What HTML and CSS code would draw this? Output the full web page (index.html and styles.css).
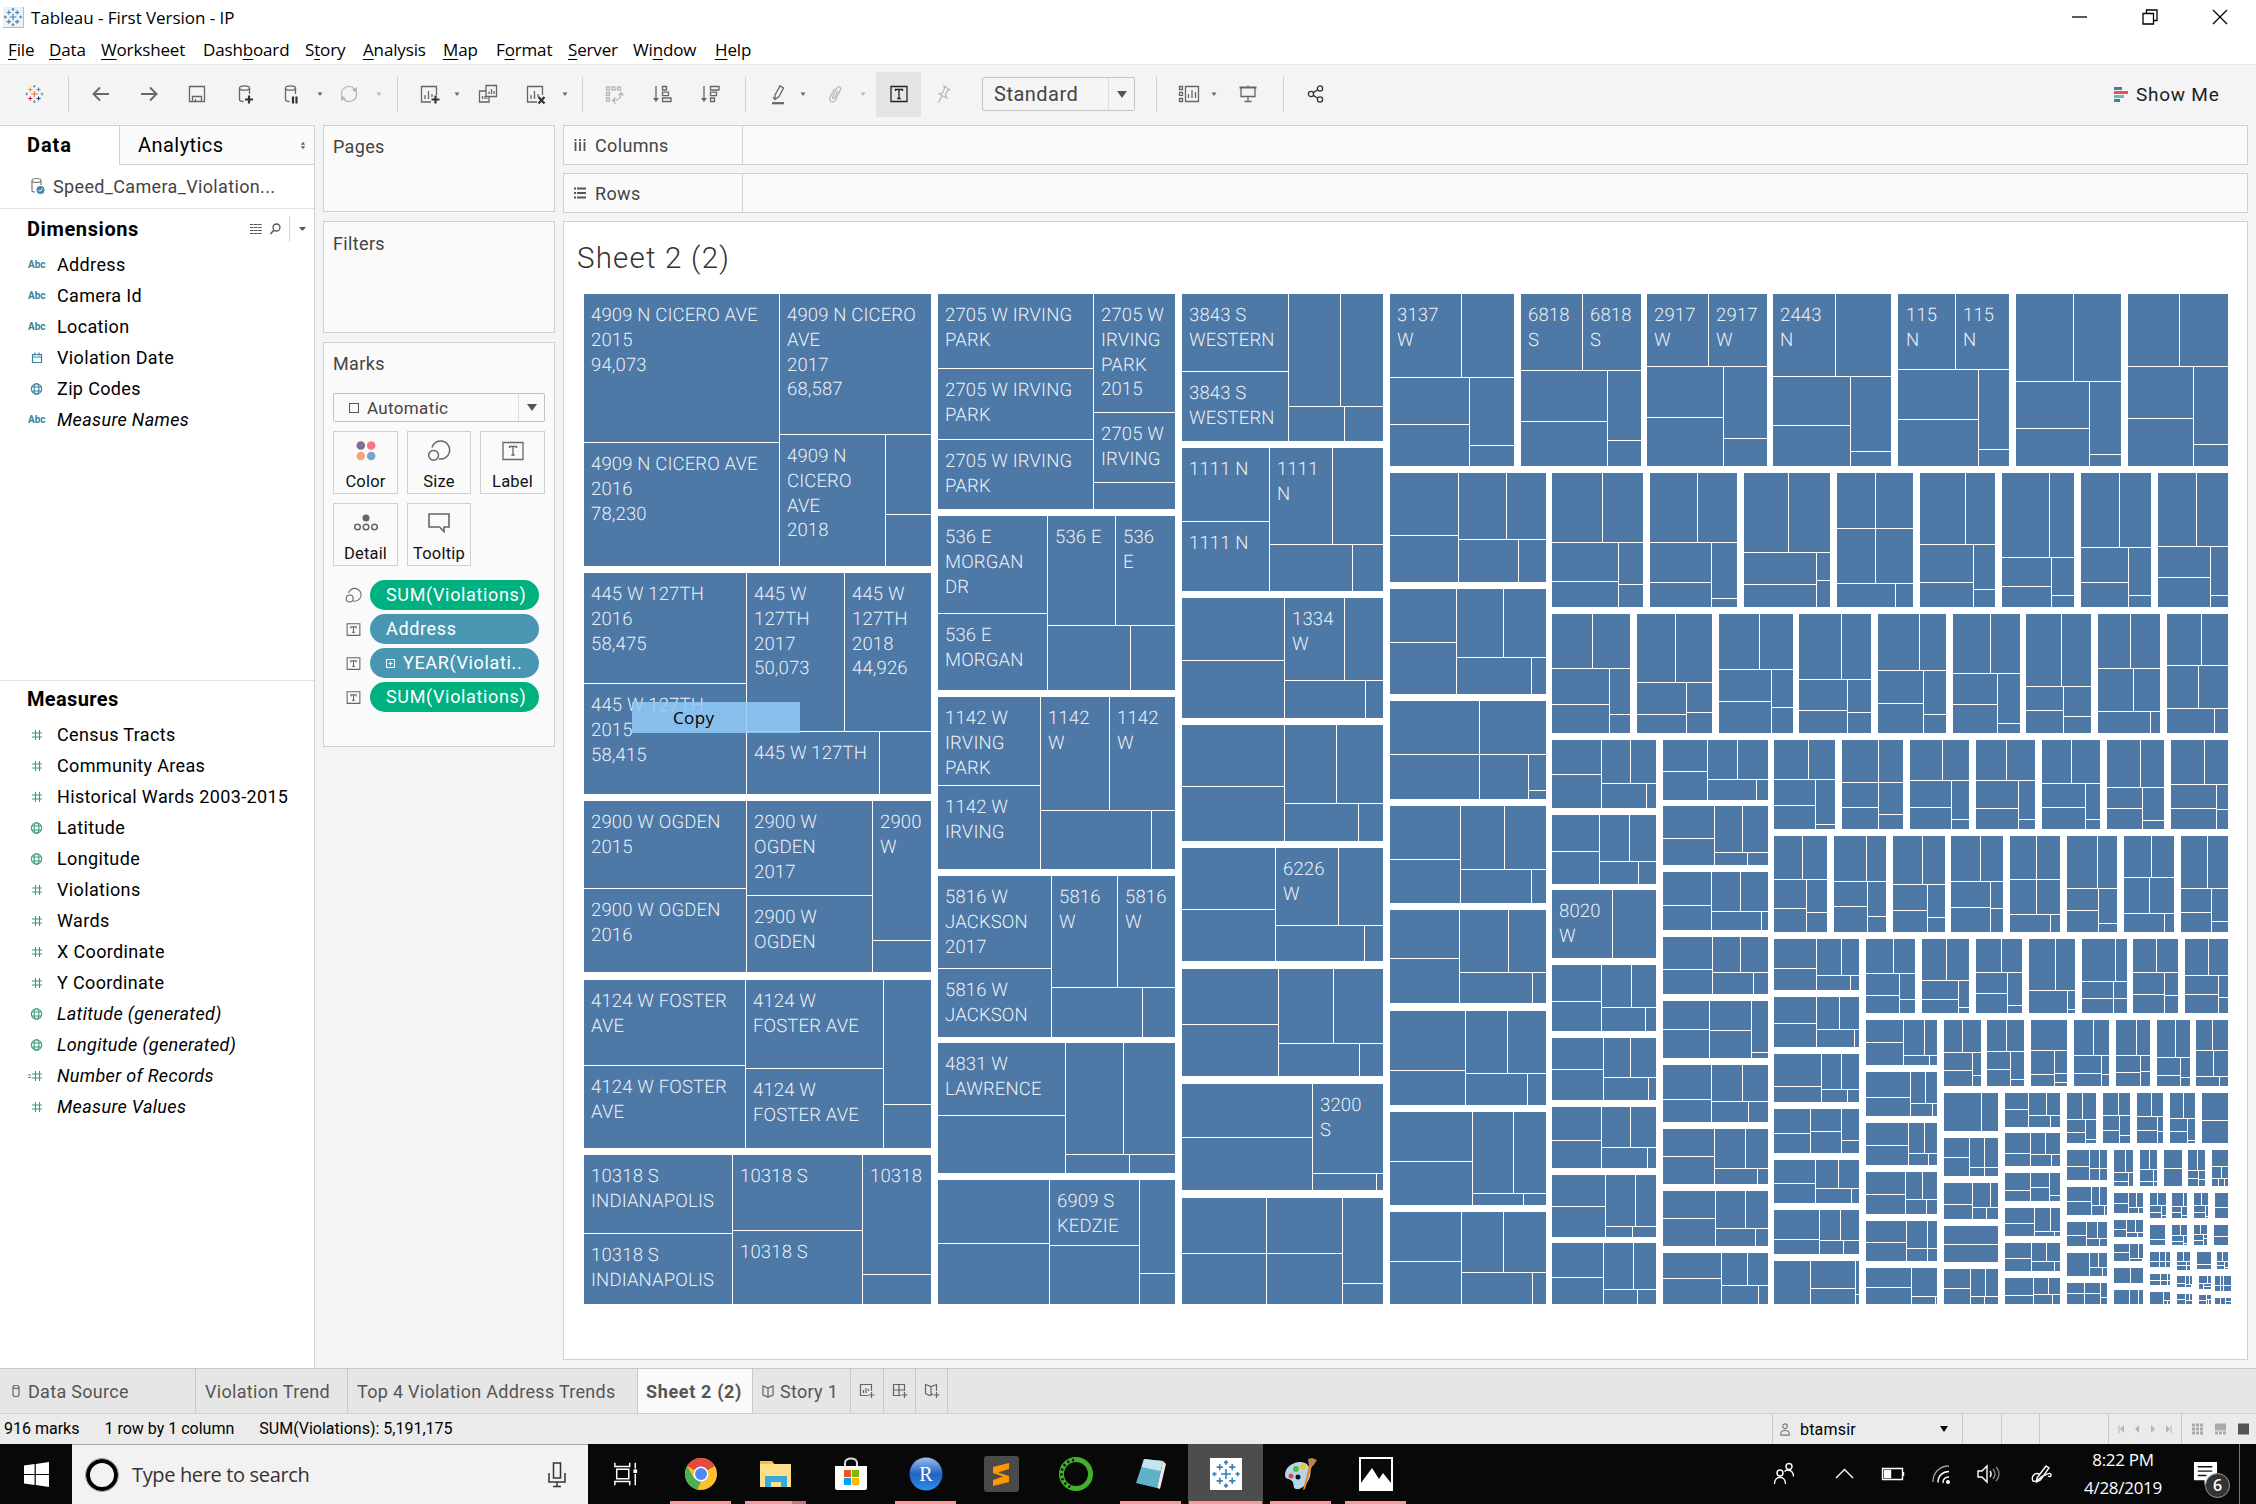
FILE: index.html
```html
<!DOCTYPE html>
<html lang="en">
<head>
<meta charset="utf-8">
<title>Tableau - First Version - IP</title>
<link rel="stylesheet" href="styles.css">
</head>
<body>
<svg class="defs" aria-hidden="true">
  <symbol id="hash" viewBox="0 0 18 18"><path d="M7.500 4v10M11.500 4v10M4 7h10M4 11h10" fill="none" stroke="currentColor" stroke-width="1.100"/></symbol>
  <symbol id="globe" viewBox="0 0 18 18"><g fill="none" stroke="currentColor" stroke-width="1.100"><circle cx="8.500" cy="9" r="5.200"/><ellipse cx="8.500" cy="9" rx="2.400" ry="5.200"/><path d="M4 7h9M4 11h9"/></g></symbol>
  <symbol id="cal" viewBox="0 0 18 18"><path d="M4.500 5.500h9v8h-9zM4.500 8h9M7 3.500v3M11 3.500v3" fill="none" stroke="currentColor" stroke-width="1.200"/></symbol>
  <symbol id="tbox" viewBox="0 0 16 16"><path d="M2 2.500h12v11H2zM5.500 7V5.500h5V7M8 5.500v5M6.800 10.700h2.400" fill="none" stroke="currentColor" stroke-width="1"/></symbol>
  <symbol id="sizes" viewBox="0 0 24 24"><g fill="none" stroke="currentColor" stroke-width="1.500"><path d="M5 8.500A9 9 0 1 1 11.800 19.800"/><circle cx="6.600" cy="16.300" r="4.900"/></g></symbol>
  <symbol id="db" viewBox="0 0 24 24"><path d="M6.500 6v11.500c0 1 1.500 2 4 2M16.500 6v6" fill="none" stroke="currentColor" stroke-width="1.300"/><ellipse cx="11.500" cy="6" rx="5" ry="2.200" fill="none" stroke="currentColor" stroke-width="1.300"/></symbol>
  <symbol id="sheet" viewBox="0 0 24 24"><path d="M14 20H4.500V4.500h15V13M8 17v-4M11.500 17V9M15 15v-3" fill="none" stroke="currentColor" stroke-width="1.300"/></symbol>
  <symbol id="caret" viewBox="0 0 8 8"><path d="M1.500 2.500h5L4 6z" fill="currentColor"/></symbol>
  <symbol id="tableau" viewBox="0 0 24 24"><g fill="none" stroke-width="1.300"><path class="t1" d="M12 8v8M8 12h8"/><path class="t2" d="M7 4v5M4.500 6.500h5"/><path class="t3" d="M17 4v5M14.500 6.500h5"/><path class="t4" d="M7 15v5M4.500 17.500h5"/><path class="t5" d="M17 15v5M14.500 17.500h5"/><path class="t6" d="M12 1v3.500M10.300 2.700h3.400M12 19.500V23M10.300 21.300h3.400M2.700 10.300v3.400M1 12h3.500M21.300 10.300v3.400M19.500 12H23"/></g></symbol>
</svg>

<header class="titlebar">
  <svg class="app-icon blue-logo" viewBox="0 0 24 24"><use href="#tableau"/></svg>
  <span class="app-title">Tableau - First Version - IP</span>
  <svg class="win-btn" viewBox="0 0 20 20"><path d="M2 10h15"/></svg>
  <svg class="win-btn" viewBox="0 0 20 20"><path d="M3 6.500h10.500v10.500H3zM6.500 6.500V3H17v10.500h-3.500"/></svg>
  <svg class="win-btn" viewBox="0 0 20 20"><path d="M3 3l14 14M17 3L3 17"/></svg>
</header>
<nav class="menubar">
  <span><u>F</u>ile</span><span><u>D</u>ata</span><span><u>W</u>orksheet</span><span>Dash<u>b</u>oard</span><span>S<u>t</u>ory</span><span><u>A</u>nalysis</span><span><u>M</u>ap</span><span>F<u>o</u>rmat</span><span><u>S</u>erver</span><span>Wi<u>n</u>dow</span><span><u>H</u>elp</span>
</nav>

<div class="toolbar">
  <svg class="ic color-logo" viewBox="-3 -2 29 28"><use href="#tableau" width="24" height="24"/></svg>
  <i class="sep"></i>
  <svg class="ic" viewBox="0 0 24 24"><path d="M20 12H5M11 5.500L4.500 12l6.500 6.500" stroke-width="1.900"/></svg>
  <svg class="ic" viewBox="0 0 24 24"><path d="M4 12h15M13 5.500l6.500 6.500-6.500 6.500" stroke-width="1.900"/></svg>
  <svg class="ic" viewBox="0 0 24 24"><path d="M4.500 4.500h15v15h-15zM7.500 19v-4.500h9V19M10.500 19v-2"/></svg>
  <svg class="ic" viewBox="0 0 24 24"><use href="#db"/><path class="dark" d="M16 13.500v8M12 17.500h8"/></svg>
  <svg class="ic" viewBox="0 0 24 24"><use href="#db"/><path class="dark" d="M14 14.500v7M17.500 14.500v7"/></svg>
  <svg class="cr"><use href="#caret"/></svg>
  <svg class="ic off" viewBox="0 0 24 24"><path d="M4.500 13a7.500 7.500 0 0 1 13-6M19.500 11a7.500 7.500 0 0 1-13 6"/><path class="solid" d="M20 5v6l-5-3zM4 19v-6l5 3z"/></svg>
  <svg class="cr off"><use href="#caret"/></svg>
  <i class="sep"></i>
  <svg class="ic" viewBox="0 0 24 24"><use href="#sheet"/><path class="dark" d="M18.500 13.500v8M14.500 17.500h8"/></svg>
  <svg class="cr"><use href="#caret"/></svg>
  <svg class="ic" viewBox="0 0 24 24"><path d="M10 3.500h10.500v11H10zM10 9H3.500v11h9.500v-5M13 12V9.500M15.500 12V7M18 12V9M6.500 17v-3M9 17v-3M11 17v-1"/></svg>
  <svg class="ic" viewBox="0 0 24 24"><use href="#sheet"/><path class="dark" d="M15.500 15l6 6.500M21.500 15l-6 6.500"/></svg>
  <svg class="cr"><use href="#caret"/></svg>
  <i class="sep"></i>
  <svg class="ic off" viewBox="0 0 24 24"><path d="M4.500 5h3v3h-3zM10 5h3v3h-3zM15.500 5h3v3h-3zM4.500 10.500h3v3h-3zM4.500 16h3v3h-3zM11 18.500c5 0 8-3 8-7M13.500 15.500l-3 3 3 3M16.500 13.500l2.500-3 2.500 3"/></svg>
  <svg class="ic" viewBox="0 0 24 24"><path d="M5 4v14M11.500 4.500h4v3.500h-4zM11.500 10.200h6v3.500h-6zM11.500 16h8.500v3.500h-8.500z"/><path class="solid" d="M2 16h6l-3 4z"/></svg>
  <svg class="ic" viewBox="0 0 24 24"><path d="M5 4v14M11.500 4.500h8.500v3.500h-8.500zM11.500 10.200h6v3.500h-6zM11.500 16h4v3.500h-4z"/><path class="solid" d="M2 16h6l-3 4z"/></svg>
  <i class="sep"></i>
  <svg class="ic" viewBox="0 0 24 24"><path d="M9 13l5-9 3.500 2-4.500 8.500-4 3zM7 15.500l2.500 2"/><path d="M6 21.200h12" stroke-width="2.200"/></svg>
  <svg class="cr"><use href="#caret"/></svg>
  <svg class="ic off" viewBox="0 0 24 24"><path d="M9.500 15l4.500-9c1-2 4.500-1 3.500 1.500L12.500 18c-2 3.500-7 1.500-5.500-2.500L11.500 6.500M9.500 15c0 2 1.500 2 2 1l3.500-7"/></svg>
  <svg class="cr off"><use href="#caret"/></svg>
  <span class="label-toggle"><svg class="ic" viewBox="0 0 24 24"><path d="M4 4.500h16v15H4zM8.500 9V7.500h7V9M12 7.500v9M10.200 16.500h3.600"/></svg></span>
  <svg class="ic off" viewBox="0 0 24 24"><path d="M13 4l5.500 3.500-2 .8-2 4.500 1.500 3.200-8-4 3.500-1 2-4.500zM11 14l-3.500 6.500"/></svg>
  <div class="select fit"><span>Standard</span><b></b></div>
  <i class="sep"></i>
  <svg class="ic" viewBox="0 0 24 24"><path d="M8.500 4.500h13v15h-13zM11.500 16v-4M15 16V8M18.500 16v-6M2.500 4.500h3v3h-3zM2.500 10.300h3v3h-3zM2.500 16.500h3v3h-3z"/></svg>
  <svg class="cr"><use href="#caret"/></svg>
  <svg class="ic" viewBox="0 0 24 24"><path d="M5 6v8.500h14V6M12 14.500V19M8.500 19.500h7M12 3.500V5"/><path d="M3.500 5.500h17" stroke-width="2"/></svg>
  <i class="sep"></i>
  <svg class="ic dk" viewBox="0 0 24 24"><circle cx="7" cy="12" r="2.600"/><circle cx="16" cy="6.500" r="2.600"/><circle cx="16" cy="17.500" r="2.600"/><path d="M9.200 10.600l4.600-2.800M9.200 13.400l4.600 2.800"/></svg>
  <div class="showme"><svg viewBox="0 0 15 16"><path d="M0 1h8v3H0z" fill="#4e79a7"/><path d="M0 5h14v3H0z" fill="#e15759"/><path d="M0 9h10v3H0z" fill="#76b7b2"/><path d="M0 13h6v3H0z" fill="#4e79a7"/></svg><span>Show Me</span></div>
</div>

<main class="work">
  <aside class="data-pane">
    <div class="pane-tabs"><div class="on">Data</div><div class="other">Analytics<svg viewBox="0 0 8 12"><path d="M1 5l3-4 3 4zM1 7l3 4 3-4z" fill="#666"/></svg></div></div>
    <div class="source"><svg viewBox="0 0 16 18"><path d="M2 4v9.500c0 1 1.500 1.500 3 1.500M11 4v4" fill="none" stroke="#777" stroke-width="1.200"/><ellipse cx="6.500" cy="3.500" rx="4.500" ry="2" fill="none" stroke="#777" stroke-width="1.200"/><circle cx="10.500" cy="13" r="4" fill="#3b8ca8"/><path d="M8.500 13l1.500 1.500 2.500-3" fill="none" stroke="#fff"/></svg><span>Speed_Camera_Violation...</span></div>
    <section class="fields dims">
      <h2>Dimensions<svg class="tools" viewBox="0 0 60 28"><path d="M1 9.500h12M1 12.500h12M1 15.500h12M1 18.500h12" stroke="#555" stroke-dasharray="3.500 .6" stroke-width="1.200"/><circle cx="27.500" cy="12.500" r="3.500" fill="none" stroke="#555" stroke-width="1.300"/><path d="M25 15l-3.500 4" stroke="#555" stroke-width="1.500"/><path d="M40.500 1v26" stroke="#d4d4d4"/><path d="M50 12h7l-3.500 4z" fill="#555"/></svg></h2>
      <ul>
        <li><b>Abc</b>Address</li><li><b>Abc</b>Camera Id</li><li><b>Abc</b>Location</li>
        <li><svg><use href="#cal"/></svg>Violation Date</li><li><svg><use href="#globe"/></svg>Zip Codes</li><li><b>Abc</b><em>Measure Names</em></li>
      </ul>
    </section>
    <section class="fields meas">
      <h2>Measures</h2>
      <ul>
        <li><svg><use href="#hash"/></svg>Census Tracts</li><li><svg><use href="#hash"/></svg>Community Areas</li><li><svg><use href="#hash"/></svg>Historical Wards 2003-2015</li>
        <li><svg><use href="#globe"/></svg>Latitude</li><li><svg><use href="#globe"/></svg>Longitude</li><li><svg><use href="#hash"/></svg>Violations</li>
        <li><svg><use href="#hash"/></svg>Wards</li><li><svg><use href="#hash"/></svg>X Coordinate</li><li><svg><use href="#hash"/></svg>Y Coordinate</li>
        <li><svg><use href="#globe"/></svg><em>Latitude (generated)</em></li><li><svg><use href="#globe"/></svg><em>Longitude (generated)</em></li>
        <li><svg><use href="#hash"/><path d="M0 8h3M0 10.500h3" stroke="currentColor"/></svg><em>Number of Records</em></li><li><svg><use href="#hash"/></svg><em>Measure Values</em></li>
      </ul>
    </section>
  </aside>

  <div class="cards">
    <section class="card pages">Pages</section>
    <section class="card filters">Filters</section>
    <section class="card marks">
      <h3>Marks</h3>
      <div class="select mark-type"><span><i></i>Automatic</span><b></b></div>
      <div class="mark-grid">
        <div><svg viewBox="0 0 24 24"><circle cx="6.800" cy="6.500" r="4.300" fill="#856b98"/><circle cx="17.200" cy="6.500" r="4.300" fill="#fb7185"/><circle cx="6.800" cy="17" r="4.300" fill="#f2a57c"/><circle cx="17.200" cy="17" r="4.300" fill="#7ca3cc"/></svg>Color</div>
        <div><svg viewBox="0 0 24 24"><use href="#sizes"/></svg>Size</div>
        <div><svg viewBox="0 0 24 24"><path d="M2 3.500h20v17H2zM8.500 9V7.500h7V9M12 7.500v8.500M10.300 16h3.400" fill="none" stroke="#666" stroke-width="1.300"/></svg>Label</div>
        <div><svg viewBox="0 0 24 24"><circle cx="12" cy="7" r="3.500" fill="#666"/><g fill="none" stroke="#666" stroke-width="1.500"><circle cx="3.500" cy="16" r="2.800"/><circle cx="12" cy="16" r="2.800"/><circle cx="20.500" cy="16" r="2.800"/></g></svg>Detail</div>
        <div><svg viewBox="0 0 24 24"><path d="M2 3h20v13h-5v4.500L12.500 16H2z" fill="none" stroke="#666" stroke-width="1.600"/></svg>Tooltip</div>
      </div>
      <ul class="pills">
        <li><svg viewBox="0 0 24 24"><use href="#sizes"/></svg><span class="green">SUM(Violations)</span></li>
        <li><svg><use href="#tbox"/></svg><span class="blue">Address</span></li>
        <li><svg><use href="#tbox"/></svg><span class="blue"><svg class="plus" viewBox="0 0 9 9"><path d="M.5.500h8v8h-8zM4.500 2.500v4M2.500 4.500h4"/></svg>YEAR(Violati..</span></li>
        <li><svg><use href="#tbox"/></svg><span class="green">SUM(Violations)</span></li>
      </ul>
    </section>
  </div>

  <div class="canvas">
    <div class="shelf"><div class="shelf-name"><svg viewBox="0 0 12 12"><path d="M1.500 0v2M1.500 3v9M6 0v2M6 3v9M10.500 0v2M10.500 3v9"/></svg>Columns</div></div>
    <div class="shelf"><div class="shelf-name"><svg viewBox="0 0 12 12"><path d="M0 1.500h2M3 1.500h9M0 6h2M3 6h9M0 10.500h2M3 10.500h9"/></svg>Rows</div></div>
    <section class="view">
      <h1>Sheet 2 (2)</h1>
      <svg class="treemap" id="treemap" viewBox="584 294 1650 1012" width="1650" height="1012" shape-rendering="crispEdges"></svg>
      <div class="context-menu">Copy</div>
    </section>
  </div>
</main>

<footer class="tabs">
  <div class="tab source-tab"><svg viewBox="0 0 8 14"><path d="M1 3v8c0 2 6 2 6 0V3M1 3c0 2 6 2 6 0S1 1 1 3"/></svg>Data Source</div>
  <div class="tab">Violation Trend</div>
  <div class="tab">Top 4 Violation Address Trends</div>
  <div class="tab active">Sheet 2 (2)</div>
  <div class="tab"><svg class="book" viewBox="0 0 12 14"><path d="M1 2l5 2 5-2v9l-5 2-5-2zM6 4v9"/></svg>Story 1</div>
  <div class="tab add"><svg viewBox="0 0 16 16"><path d="M9 12.500H1.500v-11h11V8M4.500 10V7M7 10V5M9.500 8V6M12.500 9v6M9.500 12h6"/></svg></div>
  <div class="tab add"><svg viewBox="0 0 16 16"><path d="M9 12.500H1.500v-11h11V8M1.500 7h11M7 1.500v11M12.500 9v6M9.500 12h6"/></svg></div>
  <div class="tab add"><svg viewBox="0 0 16 16"><path d="M9 11l-3 1.500-4.500-2V1.500L7 3.500l5.500-2V8M7 3.500V12M12.500 9v6M9.500 12h6"/></svg></div>
</footer>
<div class="status">
  <span>916 marks</span><span>1 row by 1 column</span><span>SUM(Violations): 5,191,175</span>
  <div class="user"><svg viewBox="0 0 12 16"><circle cx="6" cy="4.500" r="2.500"/><path d="M1.500 14v-2c0-4 9-4 9 0v2z"/></svg>btamsir<svg class="down" viewBox="0 0 8 6"><path d="M0 0h8L4 6z"/></svg></div>
  <i></i><i></i><i></i>
  <div class="pager"><svg viewBox="0 0 56 10"><path d="M1 1v8M53 1v8" stroke="#b5b5b5"/><path d="M6 1v8L2 5zM21 1v8l-4-4zM33 1v8l4-4zM48 1v8l4-4z" fill="#b5b5b5"/></svg></div>
  <div class="views"><svg viewBox="0 0 60 12"><path d="M0 2h11M0 6h11M0 10h11M23 10h11" stroke="#aaa" stroke-width="2.800" stroke-dasharray="3 1" fill="none"/><path d="M23 .5h11v7H23z" fill="#aaa"/><path d="M46 .5h11v11H46z" fill="#555"/></svg></div>
</div>

<div class="taskbar">
  <div class="start"><svg viewBox="0 0 26 26"><path d="M0 3.700L11 2.200v10.200H0zM12.300 2L26 0v12.400H12.300zM0 13.600h11v10.200L0 22.300zM12.300 13.600H26V26l-13.700-2z" fill="#fff"/></svg></div>
  <div class="search"><span class="cortana"></span><span class="ph">Type here to search</span><svg viewBox="0 0 18 26"><path d="M5.500 1h7v15h-7zM1 11v9h16v-9M9 20v4M5 24.500h8"/></svg></div>
  <div class="app"><svg viewBox="0 0 28 28"><path d="M2 2v4h16V2M4 9h13v10H4zM2 26v-4h16v4M24 2v6M24 14v12" fill="none" stroke="#fff" stroke-width="1.600"/><path d="M22 9h4v4h-4z" fill="#fff"/></svg></div>
  <div class="app run"><svg viewBox="0 0 34 34"><circle cx="17" cy="17" r="16" fill="#fbc02d"/><path d="M17 17L3.100 9A16 16 0 0 1 30.900 9z" fill="#e14b40"/><path d="M3.100 9L10 21l7 4-4 7.500A16 16 0 0 1 3.100 9z" fill="#4caf50"/><circle cx="17" cy="17" r="7.500" fill="#fff"/><circle cx="17" cy="17" r="6" fill="#4c8bf5"/></svg></div>
  <div class="app run multi"><svg viewBox="0 0 34 34"><path d="M1 4h12l2 3h17v23H1z" fill="#ffe08a"/><path d="M1 4h12l2 3H1z" fill="#f5c03a"/><path d="M6 19h22v11h-6v-5H12v5H6z" fill="#36a9e1"/></svg></div>
  <div class="app"><svg viewBox="0 0 34 34"><path d="M11 10V6c0-6 12-6 12 0v4" fill="none" stroke="#ddd" stroke-width="2"/><path d="M1 9h32v22c0 1-1 2-2 2H3c-1 0-2-1-2-2z" fill="#fff"/><path d="M10 13h7v7h-7z" fill="#f25022"/><path d="M18 13h7v7h-7z" fill="#7fba00"/><path d="M10 21h7v7h-7z" fill="#00a4ef"/><path d="M18 21h7v7h-7z" fill="#ffb900"/></svg></div>
  <div class="app run"><svg viewBox="0 0 34 34"><defs><linearGradient id="rb" x1="0" y1="0" x2="0" y2="1"><stop offset="0" stop-color="#9cc0f0"/><stop offset=".5" stop-color="#1f63c4"/><stop offset="1" stop-color="#2b8ff0"/></linearGradient></defs><circle cx="17" cy="17" r="16.500" fill="url(#rb)"/><text x="17" y="24" text-anchor="middle" class="r-letter">R</text></svg></div>
  <div class="app"><svg viewBox="0 0 34 34"><rect x="0" y="-1" width="35" height="36" rx="3" fill="#4a4a4a"/><path d="M25 6v6l-11 3.500L25 19v6L9 29v-6l10-3.500L9 16v-6z" fill="#ff9800"/></svg></div>
  <div class="app"><svg viewBox="0 0 34 34"><circle cx="17" cy="17" r="14.500" fill="none" stroke="#43b02a" stroke-width="5"/><path d="M15 3A14 14 0 0 0 13 30.500" fill="none" stroke="#0a0a0a" stroke-width="2.500" stroke-dasharray="2 3"/></svg></div>
  <div class="app run"><svg viewBox="0 0 34 34"><path d="M10 2l19 2-6 27-21-5z" fill="#5fb3c9"/><path d="M10 2l19 2-2.500 10-19-4z" fill="#c3e6ee"/><path d="M29 4l3 3-6 25-3-1z" fill="#e8e8e8"/></svg></div>
  <div class="app run current"><svg class="blue-logo" viewBox="0 0 34 34"><path d="M1 1h32v32H1z" fill="#fff" stroke="none"/><use href="#tableau" x="2" y="2" width="30" height="30"/></svg></div>
  <div class="app run"><svg viewBox="0 0 34 34"><path d="M15 5c10-1 14 9 10 17-3 7-9 11-13 10s-1-5-4-8-7-1-7-6C1 11 7 6 15 5z" fill="#b5d7ec"/><circle cx="19" cy="10" r="3" fill="#f2c230"/><circle cx="12" cy="12" r="3" fill="#59b947"/><circle cx="7" cy="19" r="2.500" fill="#e34b3d"/><circle cx="14" cy="20" r="2.500" fill="#10131a"/><path d="M19 33l2-1 7-23-3-1z" fill="#e58a25"/><path d="M25 9l-1-7 4-1 5 2-4 6z" fill="#b9824f"/></svg></div>
  <div class="app run"><svg viewBox="0 0 34 34"><path d="M1 1h32v32H1z" fill="#0a0a0a" stroke="#fff" stroke-width="2"/><path d="M2 32v-6L13 11l7 11 4-6 8 10v6z" fill="#fff"/></svg></div>
  <div class="tray">
    <svg viewBox="0 0 24 24"><circle cx="8" cy="11" r="3"/><path d="M2.500 22c0-9 11-9 11 0"/><circle cx="17" cy="4.500" r="3"/><path d="M12.500 9.500c3-3 9-1 9 5"/></svg>
    <svg viewBox="0 0 24 24"><path d="M4 16l8.500-8.500L21 16"/></svg>
    <svg viewBox="0 0 24 24"><path d="M1.500 6.500h20v11h-20zM22.500 10v4"/><path d="M3.500 8.500h6v7h-6z" fill="#fff"/></svg>
    <svg viewBox="0 0 24 24"><path d="M4 20C4 10 11 4 20 4" opacity=".6"/><path d="M9 20.500c0-7 5-11 11-11M14 21c0-4 2-6 6-6"/><circle cx="19" cy="20" r="1.300" fill="#fff"/></svg>
    <svg viewBox="0 0 24 24"><path d="M2 9h4l5-5v16l-5-5H2zM14 9c1.500 2 1.500 4 0 6"/><path d="M17 7c2.500 3 2.500 7 0 10M20 5c4 4 4 10 0 14" opacity=".5"/></svg>
    <svg viewBox="0 0 24 24"><path d="M7 16l9-12 3 2-8.500 12-4 2zM10 12c-6-2-9 3-7 7 4 2 6-3 10-5s8-4 8-1-3 1-3 1"/></svg>
    <div class="clock">8:22 PM<br>4/28/2019</div>
    <div class="notify"><svg viewBox="0 0 26 26"><path d="M1 1h24v19h-8l-5 5v-5H1z" fill="#fff"/><path d="M5 6h15M5 10.500h15M5 15h9" stroke="#111" stroke-width="1.500"/></svg><b>6</b></div>
  </div>
</div>
<script src="treemap.js"></script>
</body>
</html>
```
FILE: styles.css
```css
* { box-sizing: border-box; }
body { margin: 0; width: 2256px; height: 1504px; overflow: hidden; background: #f4f4f4; font-family: Roboto, "Liberation Sans", sans-serif; font-size: 18px; color: #000; display: flex; flex-direction: column; }
ul, h1, h2, h3 { margin: 0; padding: 0; list-style: none; font-weight: inherit; font-size: inherit; }
svg { display: block; flex: none; }
.defs { display: none; }

.titlebar { height: 36px; background: #fff; display: flex; align-items: center; padding: 0 26px 2px 3px; font: 17px "Open Sans", sans-serif; flex: none; }
.app-icon { width: 21px; height: 21px; background: #eef2f6; border-right: 1px solid #bbb; border-bottom: 1px solid #bbb; }
.app-title { margin-left: 7px; flex: 1; letter-spacing: -.05px; }
.win-btn { width: 20px; height: 20px; margin-left: 50px; fill: none; stroke: #000; stroke-width: 1.300; }
.blue-logo { stroke: #3a82b5; }
.color-logo { --t1: #e8762d; --t2: #eb912b; --t3: #59879b; --t4: #c72035; --t5: #1f447e; --t6: #7f8fae; }
.t1 { stroke: var(--t1); }
.t2 { stroke: var(--t2); }
.t3 { stroke: var(--t3); }
.t4 { stroke: var(--t4); }
.t5 { stroke: var(--t5); }
.t6 { stroke: var(--t6); }

.menubar { height: 28px; flex: none; background: #fff; display: grid; grid-template-columns: 41px 52px 102px 102px 58px 80px 53px 72px 65px 82px auto; justify-content: start; align-items: center; padding-left: 8px; font: 17px "Open Sans", sans-serif; letter-spacing: -.15px; padding-bottom: 1px; }
.menubar u { text-underline-offset: 3px; text-decoration-thickness: 1px; }

.toolbar { height: 61px; flex: none; border-top: 1px solid #eaeaea; padding: 0 0 2px 22px; display: grid; align-items: center; justify-items: start; grid-template-columns: 46px 21px 48px 48px 48px 46px 37px 21px 38px 22px 20px 36px 23px 47px 38px 21px 20px 49px 48px 46px 21px 33px 24px 36px 17px 55px 51px 174px 21px 33px 26px 47px 21px 810px 1fr; color: #666; }
.ic { width: 24px; height: 24px; fill: none; stroke: currentColor; stroke-width: 1.300; }
.ic .solid { fill: currentColor; stroke: none; }
.ic .dark { stroke: #333; stroke-width: 2.200; }
.off { color: #b8b8b8; }
.dk { color: #333; }
.cr { width: 8px; height: 8px; }
.sep { width: 1px; height: 35px; background: #d0d0d0; }
.label-toggle { width: 45px; height: 45px; background: #e5e5e5; display: grid; place-items: center; color: #222; }
.select { display: flex; align-items: stretch; border: 1px solid #c4c4c4; border-radius: 2px; color: #444; background: #f5f5f5; }
.select span { flex: 1; display: flex; align-items: center; }
.select b { width: 26px; border-left: 1px solid #ddd; display: grid; place-items: center; }
.select b::after { content: ""; border: 5.500px solid transparent; border-top: 7px solid #555; border-bottom: 0; }
.fit { width: 153px; height: 34px; font-size: 20px; padding-left: 11px; letter-spacing: .5px; }
.showme { display: flex; gap: 7px; align-items: center; color: #222; font-size: 19px; letter-spacing: .75px; }
.showme svg { width: 15px; height: 16px; }

.work { height: 1243px; flex: none; display: flex; align-items: stretch; letter-spacing: .35px; }
.data-pane { width: 315px; background: #fff; border-top: 1px solid #d4d4d4; border-right: 1px solid #d0d0d0; }
.pane-tabs { display: flex; height: 39px; font-size: 20px; line-height: 38px; }
.on { width: 119px; padding-left: 27px; font-weight: 700; font-size: 20px; letter-spacing: .9px; }
.other { flex: 1; padding: 0 8px 0 18px; border-left: 1px solid #d0d0d0; border-bottom: 1px solid #d0d0d0; background: #fafafa; display: flex; justify-content: space-between; align-items: center; letter-spacing: .45px; }
.other svg { width: 6px; height: 9px; }
.source { height: 44px; display: flex; align-items: center; padding: 0 0 1px 30px; gap: 7px; border-bottom: 1px solid #e2e2e2; color: #444; }
.source svg { width: 16px; height: 18px; }
.fields h2 { font-weight: 700; font-size: 20px; padding-left: 27px; display: flex; justify-content: space-between; align-items: center; letter-spacing: .6px; }
.meas h2 { letter-spacing: .35px; }
.tools { width: 60px; height: 28px; margin-right: 5px; }
.dims { height: 472px; padding-top: 4px; border-bottom: 1px solid #e2e2e2; color: #000; }
.dims h2 { height: 31px; margin-bottom: 5px; }
.meas h2 { height: 32px; margin: 2px 0 4px; }
.fields li { height: 31px; display: flex; align-items: center; padding-left: 28px; }
.fields li b, .fields li svg { width: 18px; height: 18px; margin-right: 11px; color: #3f9b79; }
.fields li b { font-size: 10px; line-height: 18px; letter-spacing: 0; }
.dims li b, .dims li svg { color: #3a7f9c; }

.cards { width: 232px; margin-left: 8px; display: flex; flex-direction: column; gap: 9px; }
.card { border: 1px solid #d0d0d0; background: #fafafa; padding: 10px 9px; color: #444; line-height: 22px; }
.pages { height: 87px; }
.filters { height: 112px; padding-top: 11px; }
.marks { height: 405px; }
.mark-type { height: 29px; margin-top: 18px; background: #fafafa; width: 212px; font-size: 17px; }
.mark-type span { padding-left: 15px; }
.mark-type span i { width: 10px; height: 10px; border: 1px solid #555; margin-right: 8px; }
.mark-grid { display: grid; grid-template-columns: 65px 64px 65px; gap: 9px; margin-top: 9px; color: #111; font-size: 16.500px; }
.mark-grid div { height: 63px; border: 1px solid #d0d0d0; display: flex; flex-direction: column; align-items: center; justify-content: space-between; padding: 7px 0 0; letter-spacing: .2px; }
.mark-grid svg { width: 24px; height: 24px; color: #666; }
.pills { margin: 14px 0 0 12px; }
.pills li { display: flex; align-items: center; gap: 8px; height: 34px; padding-bottom: 4px; color: #666; }
.pills li > svg { width: 17px; height: 17px; }
.pills span { width: 169px; height: 30px; border-radius: 15px; color: #fff; padding-left: 16px; display: flex; align-items: center; letter-spacing: .65px; }
.green { background: #00b180; }
.blue { background: #4996b2; }
.plus { width: 9px; height: 9px; margin-right: 8px; fill: none; stroke: #fff; stroke-width: 1; }

.canvas { width: 1685px; margin-left: 8px; display: flex; flex-direction: column; }
.shelf { height: 40px; margin-bottom: 8px; border: 1px solid #d0d0d0; background: #fafafa; color: #444; display: flex; }
.shelf-name { width: 179px; border-right: 1px solid #d0d0d0; display: flex; align-items: center; gap: 9px; padding-left: 10px; }
.shelf-name svg { width: 12px; height: 12px; stroke: #555; stroke-width: 1.800; }
.view { position: relative; height: 1139px; border: 1px solid #d0d0d0; background: #fff; padding: 17px 0 0 20px; }
.view h1 { font-weight: 300; font-size: 29.500px; line-height: 38px; color: #333; margin: 0 0 17px -7px; letter-spacing: 1.200px; }
.treemap rect { fill: #4e79a7; }
.treemap rect.cut { fill: #fff; }
.treemap text { font-weight: 300; font-size: 18.500px; fill: #fff; fill-opacity: .9; letter-spacing: .15px; text-rendering: geometricPrecision; }
.context-menu { position: absolute; left: 68px; top: 480px; width: 168px; height: 31px; background: rgba(145, 201, 247, .86); font: 17px/31px "Open Sans", sans-serif; padding-left: 41px; }

.tabs { height: 46px; flex: none; border-top: 1px solid #c8c8c8; border-bottom: 1px solid #d0d0d0; background: #e6e6e6; display: grid; grid-template-columns: 196px 152px 290px 115px 98px 33px 32px 32px; color: #555; letter-spacing: .3px; }
.tab { border-right: 1px solid #c8c8c8; display: flex; align-items: center; padding-left: 9px; gap: 6px; white-space: nowrap; }
.tab svg { fill: none; stroke: #666; stroke-width: 1.200; width: 8px; height: 14px; }
.source-tab { padding-left: 12px; gap: 8px; }
.active { background: #fafafa; font-weight: 700; font-size: 18px; padding-left: 8px; letter-spacing: .65px; }
.tab .book { width: 12px; height: 14px; }
.add { padding-left: 8px; }
.add svg { width: 16px; height: 16px; }
.status { height: 30px; flex: none; background: #ebebeb; display: flex; align-items: stretch; line-height: 29px; font-size: 16px; padding-left: 4px; }
.status span { margin-right: 25px; }
.user { margin-left: auto; width: 190px; border-left: 1px solid #c8c8c8; padding: 0 14px 0 6px; display: flex; align-items: center; gap: 9px; letter-spacing: .2px; }
.user svg { width: 12px; height: 15px; fill: none; stroke: #777; stroke-width: 1.200; }
.user .down { width: 8px; height: 6px; margin-left: auto; fill: #000; stroke: none; }
.status i { width: 38.500px; border-left: 1px solid #c8c8c8; }
.status i:last-of-type { width: 69px; }
.pager, .views { border-left: 1px solid #c8c8c8; display: flex; align-items: center; padding-left: 9px; width: 73px; }
.pager svg { width: 56px; height: 10px; }
.views { width: 75px; padding-left: 10px; }
.views svg { width: 60px; height: 12px; }

.taskbar { height: 60px; flex: none; background: #080808; display: flex; color: #fff; }
.start { width: 72px; display: grid; place-items: center; }
.start svg { width: 25px; height: 25px; }
.search { width: 516px; background: #f2f2f2; border-top: 1px solid #aaa; display: flex; align-items: center; padding: 0 22px 0 14px; color: #333; font: 20px "Open Sans", sans-serif; letter-spacing: -.35px; }
.cortana { width: 32px; height: 32px; border: 4.500px solid #000; border-radius: 50%; outline: 1px solid #999; }
.ph { flex: 1; margin-left: 14px; }
.search svg { width: 18px; height: 26px; fill: none; stroke: #333; stroke-width: 1.500; }
.app { width: 75px; border: solid transparent; border-width: 0 7px; display: grid; place-items: center; }
.app svg { width: 34px; height: 34px; margin-bottom: 1px; overflow: visible; }
.app:nth-child(3) svg { width: 26px; height: 26px; }
.run { background: linear-gradient(#ff9797, #ff9797) bottom / 100% 3px no-repeat padding-box; }
.multi { background: linear-gradient(90deg, #ff9797 77%, #c87474 77%) bottom / 100% 3px no-repeat padding-box; }
.current { border-width: 0 1px; background: linear-gradient(#ff9797, #ff9797) bottom / 100% 3px no-repeat padding-box, #4d4d4d; }
.r-letter { font: 20px "Liberation Serif", serif; fill: #fff; }
.tray { flex: 1; margin-left: 359px; display: grid; grid-template-columns: 60px 49px 48px 47px 54px 39px 111px 60px; align-items: center; justify-content: start; }
.tray > svg { width: 24px; height: 24px; fill: none; stroke: #fff; stroke-width: 1.400; }
.clock { width: 108px; text-align: center; font: 17px/28px "Open Sans", sans-serif; letter-spacing: -.3px; padding-top: 0; }
.notify { position: relative; width: 60px; height: 60px; padding: 17px 0 0 13px; border-right: 1px solid #777; }
.notify svg { width: 25px; height: 25px; }
.notify b { position: absolute; left: 25px; top: 29px; width: 25px; height: 25px; border-radius: 50%; border: 1px solid #999; background: #333; font: 600 16px/22px "Open Sans", sans-serif; text-align: center; }
```
FILE: treemap.js
```js
// Each sector has an origin and a scale; every row in it is one address.
// A: column cut, left row cut, right row cut, top-right and bottom-right column cuts
// B: row cut, top column cut, bottom column cut, bottom-left and bottom-right row cuts
// C: two column cuts, then one row cut for each column
// D: two row cuts, then one column cut for each row
// h / v: a single extra cut
const sectors = [
  [560, 280, 2.529, 3, `
A 61 42 938 857 555 487 463 0 823
h 703 823 938
A 61 879 938 1541 471 1210 1354 720 808
A 956 42 1555 686 1350 265 397 0 0
h 478 956 1350
h 606 1350 1555
A 956 708 1555 1229 1233 1000 1036 1405 1443`],
  [560, 780, 2.529, 2.904, `
A 956 -241 1555 258 1215 16 89 1390 1496
C 61 61 938 559 471 790 315 335 465
C 61 581 938 1070 469 818 829 837 942
C 61 1089 938 1522 436 765 1317 1308 1435
A 956 279 1555 745 1243 547 602 1410 1473
A 956 765 1555 1140 1278 974 1087 1425 1440
C 956 1161 1555 1522 1238 1466 1346 1351 1433`],
  [1160, 280, 2.8, 3, `
A 62 42 624 482 359 274 379 506 517
A 62 504 624 933 306 725 794 483 539
A 62 954 624 1313 349 1141 1201 517 576
A 62 1335 624 1683 349 1519 1570 495 556
B 644 42 991 557 292 845 867 434 496
B 1011 42 1347 557 271 1183 1253 424 482
A 644 579 1081 906 835 767 779 970 1004
A 644 927 1081 1241 830 1088 1132 962 1041
A 644 1263 1081 1556 894 1423 1423 0 1031
h 1531 1031 1081
B 1098 579 1352 980 787 1239 1284 904 913
B 1098 1002 1316 1358 1165 1211 1258 1273 1304
B 1336 1002 1546 1358 1207 1443 1474 1303 1298
A 1098 1380 1389 1584 1236 1484 1511 1318 1362`],
  [1160, 780, 3, 2.904, `
A 66 197 669 527 346 376 422 535 613
A 66 549 669 861 355 710 766 520 598
A 66 883 669 1192 457 1038 1142 0 650
C 66 1214 669 1522 319 548 1374 1374 1462
A 690 76 1158 356 901 231 259 1034 1114
A 690 377 1158 649 898 518 559 1045 1117
A 690 671 1158 943 916 844 852 1042 1102
A 690 964 1158 1233 937 1107 1200 1060 1090
A 690 1254 1158 1522 904 1398 1430 1030 1117
A 1176 102 1488 301 1318 207 236 1408 1435
A 1176 319 1488 516 1357 0 0 0 0
A 1176 537 1488 728 1324 643 660 1414 1456
A 1176 749 1488 928 1330 840 863 1411 1465
A 1176 950 1488 1126 1324 1047 1067 1411 1462
A 1176 1147 1488 1326 1336 1238 1297 1426 1417
A 1176 1344 1488 1522 1330 1444 1479 1420 1432`],
  [1640, 280, 2.5455, 3, `
B 18 42 323 557 259 175 213 412 475
B 339 42 639 557 290 498 536 436 514
B 657 42 939 557 268 803 861 418 508
B 957 42 1224 557 304 1103 1144 445 523
B 1242 42 1497 557 259 1373 1409 415 493
B 25 579 247 980 787 146 182 907 955
B 265 579 484 980 817 378 449 913 901
D 501 579 695 980 745 910 599 599 650
B 713 579 904 980 794 829 849 907 928
B 921 579 1105 980 832 1042 1047 919 946
B 1123 579 1301 980 802 1220 1243 907 946
B 1319 579 1497 980 799 1416 1452 892 946
B 201 1002 389 1358 1168 304 334 1264 1282
B 405 1002 588 1358 1198 513 528 1291 1298
B 606 1002 779 1358 1171 711 721 1270 1303
B 797 1002 967 1358 1180 892 910 1273 1330
B 983 1002 1148 1358 1219 1073 1078 1291 1309
D 1166 1002 1324 1358 1165 1294 1248 1256 1299
D 1341 1002 1497 1358 1156 1285 1429 1421 1462`],
  [1640, 720, 2.5455, 2.6133, `
A 59 52 326 209 172 134 155 248 296
A 59 225 326 379 189 309 346 261 273
A 59 397 326 548 182 485 500 256 309
A 59 567 326 715 184 652 660 256 289
C 59 734 326 882 177 284 809 811 869
A 59 902 326 1050 182 991 997 261 276
A 59 1069 326 1213 189 1140 1172 268 299
A 59 1231 326 1374 192 1302 1329 268 294
A 59 1393 326 1525 207 1459 1478 273 301
B 341 52 496 285 155 429 446 223 273
B 514 52 669 285 163 607 607 228 247
B 687 52 837 285 158 770 793 228 260
B 855 52 1005 285 158 933 963 231 260
B 1023 52 1171 285 166 1098 1134 228 260
B 1189 52 1334 285 176 1274 1279 231 263
B 1352 52 1497 285 168 1437 1467 231 234
B 341 303 476 554 417 413 424 492 503
B 494 303 626 554 422 576 579 488 514
B 644 303 776 554 430 719 732 498 516
B 792 303 924 554 422 866 892 490 492
D 942 303 1069 554 417 508 1009 1009 1045
B 1087 303 1214 554 440 1164 1167 498 532
D 1232 303 1359 554 411 505 1302 1297 1335
B 1377 303 1497 554 440 1444 1454 503 526
A 341 572 557 706 449 649 668 513 536
A 341 724 557 855 449 793 809 508 546
A 341 873 557 998 462 957 965 513 528
C 341 1017 557 1132 434 513 1080 1076 1099
A 341 1150 557 1262 446 1212 1224 505 538
A 341 1281 557 1396 457 1357 1360 510 518
C 341 1414 557 1525 434 548 0 1485 1501
B 575 572 700 766 662 645 660 720 731
B 718 572 837 766 681 780 811 731 752
B 855 572 972 766 660 920 935 714 746
B 990 572 1107 766 707 1058 1088 0 757
B 1125 572 1240 766 684 1210 1205 728 728
B 1255 572 1369 766 660 1315 1335 718 720
B 1387 572 1497 766 668 1447 1472 717 726
A 575 784 756 902 670 843 876 724 737
A 575 920 756 1035 689 987 1003 726 744
A 575 1053 756 1163 683 1112 1133 724 734
A 575 1181 756 1291 676 1240 1252 719 729
A 575 1309 756 1414 678 1365 1381 732 732
A 575 1432 756 1525 691 1483 1506 0 752
B 774 784 868 956 869 821 846 916 929
B 883 784 977 956 866 933 943 914 940
B 995 784 1087 956 863 0 1055 927 924
h 947 1055 1087
B 1105 784 1194 956 876 1155 1175 924 927
B 1212 784 1298 956 876 1264 1274 921 919
B 1316 784 1400 956 882 1363 1376 929 935
D 1415 784 1497 956 864 931 1457 1460 1475
A 774 975 911 1074 870 0 0 0 0
A 774 1092 911 1192 838 1143 1169 877 877
A 774 1210 911 1304 847 1266 1274 892 882
B 774 1322 911 1416 1370 0 0 0 0
A 774 1435 911 1525 842 1486 1507 880 877
A 929 975 1069 1064 989 1018 1034 1035 1045
A 929 1079 1069 1166 994 1133 1135 1032 1047
C 929 1184 1069 1257 994 1042 1229 1221 1243
A 929 1275 1069 1348 1004 1316 1336 1045 1055
A 929 1367 1069 1440 996 1408 1415 1035 1055
A 929 1458 1069 1525 1001 1504 1502 1040 1050
B 1087 975 1161 1105 1044 1126 1134 1078 1096
B 1179 975 1247 1105 1034 1218 1221 1073 1086
B 1265 975 1331 1105 1036 1302 1318 1073 1076
B 1349 975 1413 1105 1041 1384 1394 1075 1099
B 1431 975 1497 1105 1046 0 0 0 0
C 1087 1124 1189 1202 1144 1169 1167 1172 1172
A 1087 1220 1189 1294 1149 1258 1269 1169 1182
A 1087 1312 1189 1375 1136 1347 1355 1164 1169
A 1087 1393 1189 1453 1144 0 1431 1167 1177
C 1087 1471 1189 1525 1131 1172 1498 1498 1509
B 1207 1124 1255 1218 1182 1236 1243 1206 0
B 1273 1124 1316 1218 1174 1297 1307 1206 1206
B 1334 1124 1380 1218 1172 0 0 0 0
B 1395 1124 1438 1218 1177 1419 1421 1199 1201
D 1456 1124 1497 1218 1167 1198 0 1480 1472
v 1488 1199 1218
A 1207 1236 1280 1288 1243 1264 1273 1264 1268
A 1207 1307 1280 1351 1238 1332 1339 1261 1266
A 1207 1369 1280 1414 1246 1391 1407 1269 1279
A 1207 1432 1280 1471 1248 0 0 0 0
C 1207 1490 1280 1525 1246 1269 0 0 0
B 1298 1236 1339 1301 1268 1318 1327 1287 1296
B 1354 1236 1392 1301 1271 1384 1379 1286 1295
B 1410 1236 1446 1301 1269 1430 1439 1287 1298
B 1464 1236 1497 1301 1274 0 0 0 0
B 1298 1320 1336 1372 1358 0 0 0 0
B 1354 1320 1392 1372 1347 1376 1384 1363 1368
B 1410 1320 1443 1372 1344 1426 1434 1360 1354
B 1461 1320 1497 1372 1350 0 0 0 0
C 1298 1390 1349 1429 1322 1337 1415 1415 1415
B 1367 1390 1400 1438 1415 1383 1391 1425 1426
B 1418 1390 1453 1435 1423 0 0 0 0
B 1469 1390 1497 1435 1415 1484 1488 1425 1430
C 1298 1448 1349 1477 1325 1342 1464 1464 1464
A 1367 1453 1405 1482 1388 1473 1476 1398 1403
B 1423 1453 1453 1487 1472 1444 1434 0 1480
C 1464 1453 1504 1492 1478 1485 1478 1478 1478
A 1298 1495 1349 1525 1332 0 1517 0 1342
A 1367 1500 1405 1525 1388 1515 1517 1398 0
A 1423 1503 1453 1525 1442 1518 1514 0 1448
C 1464 1511 1504 1525 1477 1490 0 0 1519`],
];

const labels = [
  [591, 321, "4909 N CICERO AVE|2015|94,073"], [787, 321, "4909 N CICERO|AVE|2017|68,587"],
  [591, 470, "4909 N CICERO AVE|2016|78,230"], [787, 462, "4909 N|CICERO|AVE|2018"],
  [591, 600, "445 W 127TH|2016|58,475"], [754, 600, "445 W|127TH|2017|50,073"], [852, 600, "445 W|127TH|2018|44,926"],
  [591, 711, "445 W 127TH|2015|58,415"], [754, 759, "445 W 127TH"],
  [945, 321, "2705 W IRVING|PARK"], [945, 396, "2705 W IRVING|PARK"], [945, 467, "2705 W IRVING|PARK"],
  [1101, 321, "2705 W|IRVING|PARK|2015"], [1101, 440, "2705 W|IRVING"],
  [945, 543, "536 E|MORGAN|DR"], [1055, 543, "536 E"], [1123, 543, "536|E"], [945, 641, "536 E|MORGAN"],
  [945, 724, "1142 W|IRVING|PARK"], [1048, 724, "1142|W"], [1117, 724, "1142|W"], [945, 813, "1142 W|IRVING"],
  [591, 828, "2900 W OGDEN|2015"], [754, 828, "2900 W|OGDEN|2017"], [880, 828, "2900|W"],
  [591, 916, "2900 W OGDEN|2016"], [754, 923, "2900 W|OGDEN"],
  [945, 903, "5816 W|JACKSON|2017"], [1059, 903, "5816|W"], [1125, 903, "5816|W"], [945, 996, "5816 W|JACKSON"],
  [591, 1007, "4124 W FOSTER|AVE"], [753, 1007, "4124 W|FOSTER AVE"], [591, 1093, "4124 W FOSTER|AVE"], [753, 1096, "4124 W|FOSTER AVE"],
  [591, 1182, "10318 S|INDIANAPOLIS"], [740, 1182, "10318 S"], [870, 1182, "10318"],
  [591, 1261, "10318 S|INDIANAPOLIS"], [740, 1258, "10318 S"],
  [945, 1070, "4831 W|LAWRENCE"], [1057, 1207, "6909 S|KEDZIE"],
  [1189, 321, "3843 S|WESTERN"], [1189, 399, "3843 S|WESTERN"],
  [1189, 475, "1111 N"], [1277, 475, "1111|N"], [1189, 549, "1111 N"], [1292, 625, "1334|W"],
  [1283, 875, "6226|W"], [1320, 1111, "3200|S"], [1559, 917, "8020|W"],
  [1397, 321, "3137|W"], [1528, 321, "6818|S"], [1590, 321, "6818|S"],
  [1654, 321, "2917|W"], [1716, 321, "2917|W"], [1780, 321, "2443|N"], [1906, 321, "115|N"], [1963, 321, "115|N"],
];

const out = [];
for (const [ox, oy, sx, sy, rows] of sectors) {
  const v = (x, a, b) => x && out.push(
    `<rect class="cut" x="${Math.floor(ox + x / sx)}" y="${Math.round(oy + a / sy)}" width="1" height="${Math.round(oy + b / sy) - Math.round(oy + a / sy)}"/>`);
  const h = (y, a, b) => y && out.push(
    `<rect class="cut" x="${Math.round(ox + a / sx)}" y="${Math.floor(oy + y / sy)}" width="${Math.round(ox + b / sx) - Math.round(ox + a / sx)}" height="1"/>`);
  for (const row of rows.trim().split("\n")) {
    const [kind, ...n] = row.split(" ").map((t, i) => (i ? Number(t) : t));
    if (kind === "h") { h(...n); continue; }
    if (kind === "v") { v(...n); continue; }
    const [x0, y0, x1, y1, a, b, c, d, e] = n;
    const X = Math.round(ox + x0 / sx), Y = Math.round(oy + y0 / sy);
    out.push(`<rect x="${X}" y="${Y}" width="${Math.round(ox + x1 / sx) - X}" height="${Math.round(oy + y1 / sy) - Y}"/>`);
    if (kind === "A") { v(a, y0, y1); h(b, x0, a); h(c, a, x1); v(d, y0, c || y1); v(e, c, y1); }
    if (kind === "B") { h(a, x0, x1); v(b, y0, a); v(c, a, y1); h(d, x0, c); h(e, c, x1); }
    if (kind === "C") { v(a, y0, y1); v(b, y0, y1); h(c, x0, a); h(d, a, b); h(e, b, x1); }
    if (kind === "D") { h(a, x0, x1); h(b, x0, x1); v(c, y0, a); v(d, a, b); v(e, b, y1); }
  }
}
for (const [x, y, text] of labels)
  text.split("|").forEach((line, i) => out.push(`<text x="${x}" y="${Math.round(y + i * 24.8)}">${line}</text>`));
document.getElementById("treemap").innerHTML = out.join("");
```
